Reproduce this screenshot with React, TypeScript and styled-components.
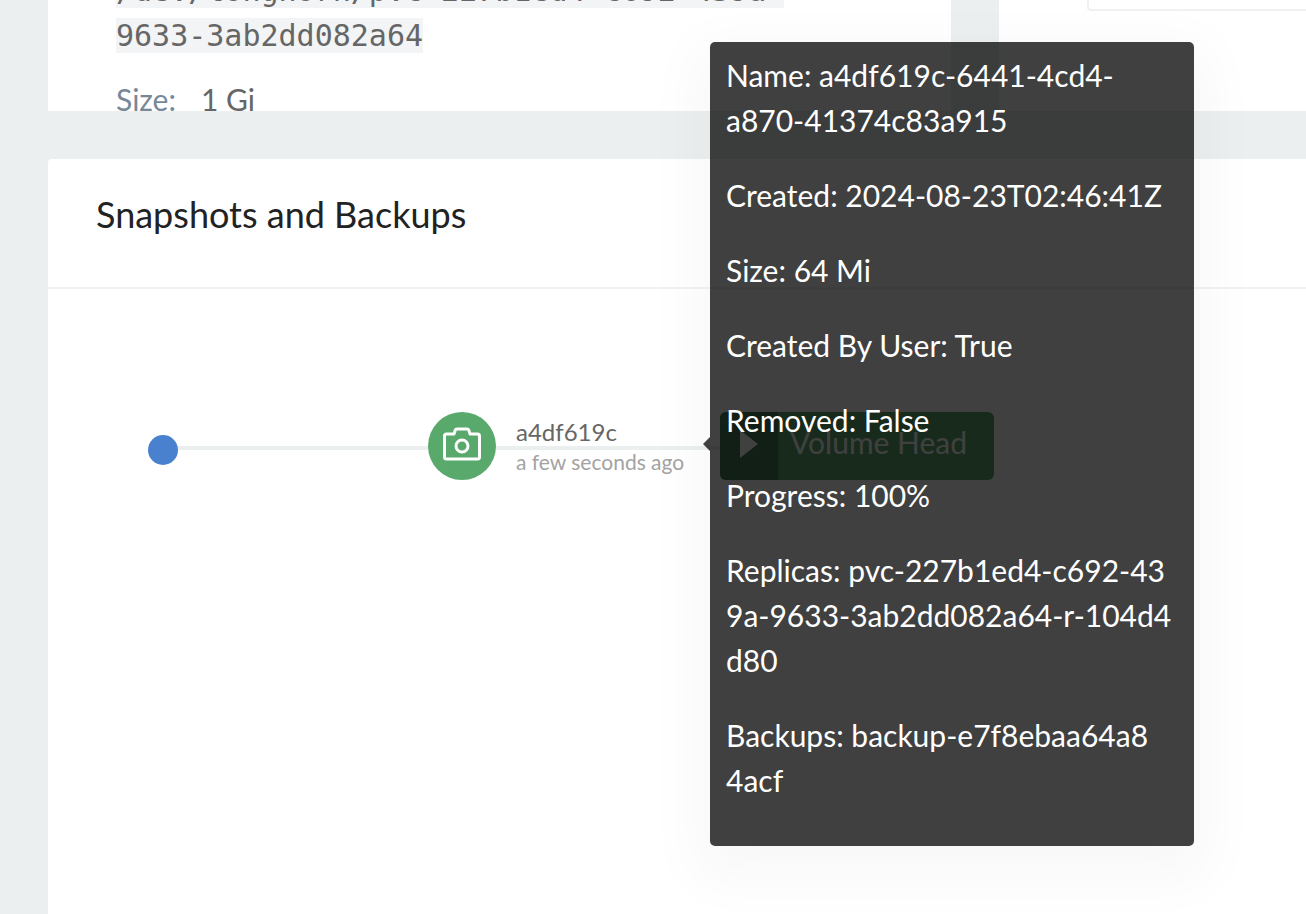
import React from 'react';
import styled, { createGlobalStyle } from 'styled-components';

const GlobalStyle = createGlobalStyle`
  * { box-sizing: border-box; }
  body {
    margin: 0;
    background: #ebeff0;
    font-family: Lato, "Open Sans", sans-serif;
    font-size: 30px;
    line-height: 45px;
    color: #666;
  }
`;

const Viewport = styled.div`
  height: 100vh;
  overflow: hidden;
`;

const Page = styled.main`
  display: flex;
  flex-direction: column;
  gap: 48px;
  margin-top: -32px;
  padding-left: 48px;
  min-height: calc(100vh + 32px);
`;

const TopRow = styled.div`
  display: grid;
  grid-template-columns: 903fr 307fr;
  gap: 48px;
  height: 143px;
`;

const Panel = styled.section`
  background: #fff;
  overflow: hidden;
  min-width: 0;
`;

const DetailPanel = styled(Panel)`
  padding: 0 68px;
`;

const Endpoint = styled.code`
  display: block;
  font-family: "DejaVu Sans Mono", "Liberation Mono", monospace;
  white-space: nowrap;
`;

const Mark = styled.span`
  background: #f2f4f5;
`;

const Field = styled.dl`
  display: flex;
  gap: 25px;
  margin: 19px 0 0;
`;

const FieldName = styled.dt`
  color: #778899;
`;

const FieldValue = styled.dd`
  margin: 0;
`;

const SidePanel = styled(Panel)`
  padding-left: 88px;
`;

const ChartFrame = styled.div`
  height: 43px;
  border: 2px solid #f0f1f1;
  border-top: 0;
  border-right: 0;
  border-bottom-left-radius: 4px;
`;

const SnapshotPanel = styled.section`
  flex: 1;
  background: #fff;
  border-top-left-radius: 4px;
`;

const PanelHeader = styled.header`
  height: 130px;
  padding: 30px 48px;
  border-bottom: 2px solid #f1f2f2;
`;

const Title = styled.h2`
  margin: 0;
  font-size: 36px;
  line-height: 50px;
  font-weight: 400;
  color: #222;
`;

const Timeline = styled.div`
  display: flex;
  align-items: center;
  padding: 123px 100px 0;
`;

const Origin = styled.span`
  width: 30px;
  height: 30px;
  border-radius: 50%;
  background: #4981ce;
  margin-top: 8px;
`;

const Connector = styled.span`
  width: 250px;
  height: 4px;
  margin-top: 4px;
  background: #ebeff0;
`;

const Snapshot = styled.div`
  position: relative;
  display: flex;
  align-items: center;
  width: 292px;
  height: 68px;
  background: linear-gradient(#ebeff0, #ebeff0) 0 34px / 100% 4px no-repeat;
`;

const SnapshotButton = styled.button`
  display: flex;
  align-items: center;
  justify-content: center;
  width: 68px;
  height: 68px;
  padding: 0 0 4px;
  border: 0;
  border-radius: 50%;
  background: #5aa96c;
`;

const SnapshotLabel = styled.div`
  display: flex;
  flex-direction: column;
  margin-left: 20px;
  white-space: nowrap;
`;

const SnapshotName = styled.span`
  font-size: 24px;
  line-height: 32px;
`;

const SnapshotAge = styled.span`
  font-size: 21px;
  line-height: 28px;
  color: #a3a3a3;
`;

const VolumeHead = styled.button`
  display: flex;
  align-items: stretch;
  width: 274px;
  height: 68px;
  padding: 0;
  border: 0;
  border-radius: 6px;
  overflow: hidden;
  background: #5ca86c;
  color: #fff;
  font: inherit;
  line-height: 60px;
`;

const PlayCell = styled.span`
  display: flex;
  align-items: center;
  justify-content: center;
  width: 58px;
  padding-bottom: 4px;
  background: #487c58;
`;

const HeadText = styled.span`
  flex: 1;
  padding-left: 12px;
  text-align: left;
`;

const Tooltip = styled.div`
  position: absolute;
  z-index: 1;
  left: 282px;
  top: -370px;
  width: 484px;
  padding: 11px 16px 13px;
  border-radius: 5px;
  background: rgba(0, 0, 0, 0.75);
  box-shadow: 0 18px 56px 16px rgba(0, 0, 0, 0.03);
  color: #fff;

  &::before {
    content: "";
    position: absolute;
    left: -7px;
    top: 395px;
    border: solid transparent;
    border-width: 7px 7px 7px 0;
    border-right-color: rgba(0, 0, 0, 0.75);
  }
`;

const TooltipLine = styled.p`
  margin: 0 0 30px;
  white-space: pre-line;
`;

const facts = [
  'Name: a4df619c-6441-4cd4-\na870-41374c83a915',
  'Created: 2024-08-23T02:46:41Z',
  'Size: 64 Mi',
  'Created By User: True',
  'Removed: False',
  'Progress: 100%',
  'Replicas: pvc-227b1ed4-c692-43\n9a-9633-3ab2dd082a64-r-104d4\nd80',
  'Backups: backup-e7f8ebaa64a8\n4acf',
];

const CameraIcon = () => (
  <svg width="40" height="36" viewBox="0 0 40 36" fill="none" stroke="#fff" strokeWidth="3" strokeLinejoin="round" aria-hidden="true">
    <path d="M4.500 8H12L13.200 4.200Q13.600 3 15 3H25Q26.400 3 26.800 4.200L28 8H35.500Q37.500 8 37.500 10V31Q37.500 33 35.500 33H4.500Q2.500 33 2.500 31V10Q2.500 8 4.500 8Z" />
    <circle cx="20" cy="20" r="6" />
  </svg>
);

export default function App() {
  return (
    <Viewport>
      <GlobalStyle />
      <Page>
        <TopRow>
          <DetailPanel>
            <Endpoint>
              <Mark>
                /dev/longhorn/pvc-227b1ed4-c692-439a-
                <br />
                9633-3ab2dd082a64
              </Mark>
            </Endpoint>
            <Field>
              <FieldName>Size:</FieldName>
              <FieldValue>1 Gi</FieldValue>
            </Field>
          </DetailPanel>
          <SidePanel>
            <ChartFrame />
          </SidePanel>
        </TopRow>
        <SnapshotPanel>
          <PanelHeader>
            <Title>Snapshots and Backups</Title>
          </PanelHeader>
          <Timeline>
            <Origin />
            <Connector />
            <Snapshot>
              <SnapshotButton aria-label="Snapshot a4df619c">
                <CameraIcon />
              </SnapshotButton>
              <SnapshotLabel>
                <SnapshotName>a4df619c</SnapshotName>
                <SnapshotAge>a few seconds ago</SnapshotAge>
              </SnapshotLabel>
              <Tooltip role="tooltip">
                {facts.map((text) => (
                  <TooltipLine key={text}>{text}</TooltipLine>
                ))}
              </Tooltip>
            </Snapshot>
            <VolumeHead>
              <PlayCell>
                <svg width="18" height="28" viewBox="0 0 18 28" fill="#fff" aria-hidden="true">
                  <path d="M0 0L18 14L0 28Z" />
                </svg>
              </PlayCell>
              <HeadText>Volume Head</HeadText>
            </VolumeHead>
          </Timeline>
        </SnapshotPanel>
      </Page>
    </Viewport>
  );
}
